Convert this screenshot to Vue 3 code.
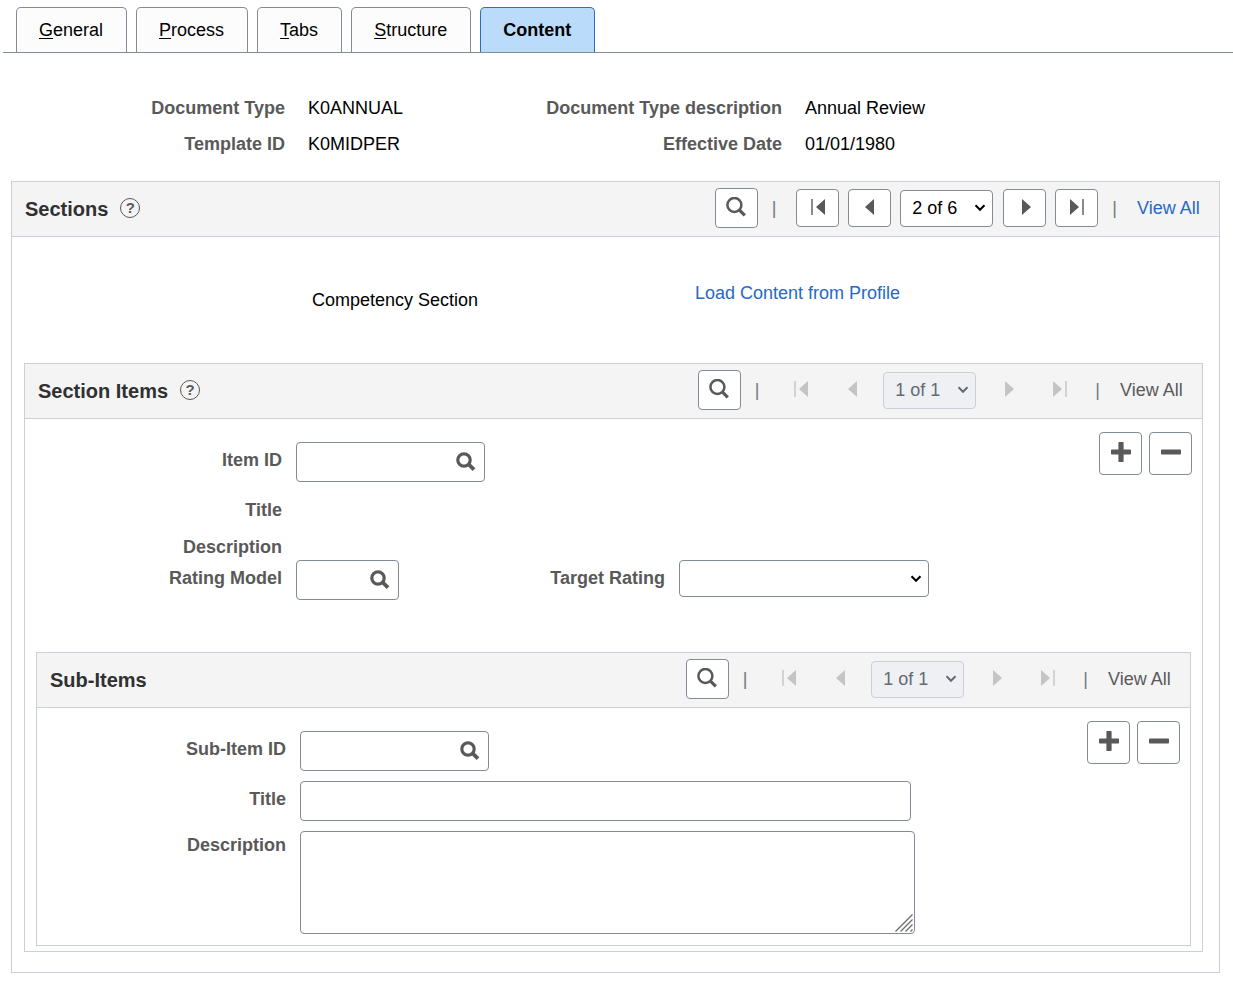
<script setup>
import { ref } from 'vue'

const tabs = [
  { key: 'G', rest: 'eneral' },
  { key: 'P', rest: 'rocess' },
  { key: 'T', rest: 'abs' },
  { key: 'S', rest: 'tructure' },
  { key: '', rest: 'Content', active: true },
]

const sectionRow = ref('2 of 6')
const sectionRows = ['1 of 6', '2 of 6', '3 of 6', '4 of 6', '5 of 6', '6 of 6']

const itemId = ref('')
const ratingModel = ref('')
const targetRating = ref('')
const subItemId = ref('')
const subTitle = ref('')
const subDescription = ref('')
</script>

<template>
  <div class="page">
    <svg class="sprite" aria-hidden="true">
      <symbol id="i-search" viewBox="0 0 20 20">
        <circle cx="8.4" cy="8" r="7" fill="none" stroke="currentColor" stroke-width="2.5" />
        <path d="M13.2 12.8 L18.8 18.4" stroke="currentColor" stroke-width="3.2" />
      </symbol>
      <symbol id="i-lookup" viewBox="0 0 20 20">
        <circle cx="8" cy="8" r="6.2" fill="none" stroke="currentColor" stroke-width="3.2" />
        <path d="M12.4 12.2 L18 17.6" stroke="currentColor" stroke-width="3.8" />
      </symbol>
      <symbol id="i-first" viewBox="0 0 14 16">
        <path d="M14 0 V16 L5 8 Z" fill="currentColor" />
        <path d="M1 0 V16" stroke="currentColor" stroke-width="1.4" />
      </symbol>
      <symbol id="i-prev" viewBox="0 0 14 16">
        <path d="M11 0 V16 L2 8 Z" fill="currentColor" />
      </symbol>
      <symbol id="i-next" viewBox="0 0 14 16">
        <path d="M4 0 V16 L13 8 Z" fill="currentColor" />
      </symbol>
      <symbol id="i-last" viewBox="0 0 14 16">
        <path d="M0 0 V16 L9 8 Z" fill="currentColor" />
        <path d="M13 0 V16" stroke="currentColor" stroke-width="1.4" />
      </symbol>
      <symbol id="i-plus" viewBox="0 0 20 20">
        <rect x="0" y="7.4" width="20" height="5.2" rx="0.8" fill="currentColor" />
        <rect x="7.4" y="0" width="5.2" height="20" rx="0.8" fill="currentColor" />
      </symbol>
      <symbol id="i-minus" viewBox="0 0 20 20">
        <rect x="0" y="7.4" width="20" height="5.2" rx="0.8" fill="currentColor" />
      </symbol>
    </svg>

    <nav class="tabs">
      <a v-for="tab in tabs" :key="tab.rest" href="#" class="tab" :class="{ active: tab.active }"><span class="key">{{ tab.key }}</span>{{ tab.rest }}</a>
    </nav>

    <div class="summary">
      <span class="label">Document Type</span><span>K0ANNUAL</span>
      <span class="label">Document Type description</span><span>Annual Review</span>
      <span class="label">Template ID</span><span>K0MIDPER</span>
      <span class="label">Effective Date</span><span>01/01/1980</span>
    </div>

    <section class="panel sections">
      <header class="bar">
        <h2>Sections</h2>
        <button class="help" type="button" aria-label="Help">?</button>
        <div class="tools">
          <button class="btn find" type="button" aria-label="Find"><svg class="i20"><use href="#i-search" /></svg></button>
          <span class="sep">|</span>
          <button class="btn" type="button" aria-label="First"><svg class="i14"><use href="#i-first" /></svg></button>
          <button class="btn" type="button" aria-label="Previous"><svg class="i14"><use href="#i-prev" /></svg></button>
          <select v-model="sectionRow" class="select rows" aria-label="Section row">
            <option v-for="row in sectionRows" :key="row">{{ row }}</option>
          </select>
          <button class="btn" type="button" aria-label="Next"><svg class="i14"><use href="#i-next" /></svg></button>
          <button class="btn" type="button" aria-label="Last"><svg class="i14"><use href="#i-last" /></svg></button>
          <span class="sep">|</span>
          <a href="#" class="link all">View All</a>
        </div>
      </header>

      <div class="intro">
        <span class="intro-name">Competency Section</span>
        <a href="#" class="link">Load Content from Profile</a>
      </div>

      <section class="panel items">
        <header class="bar">
          <h2>Section Items</h2>
          <button class="help" type="button" aria-label="Help">?</button>
          <div class="tools">
            <button class="btn find" type="button" aria-label="Find"><svg class="i20"><use href="#i-search" /></svg></button>
            <span class="sep">|</span>
            <button class="btn" type="button" disabled aria-label="First"><svg class="i14"><use href="#i-first" /></svg></button>
            <button class="btn" type="button" disabled aria-label="Previous"><svg class="i14"><use href="#i-prev" /></svg></button>
            <select class="select rows" disabled aria-label="Item row"><option>1 of 1</option></select>
            <button class="btn" type="button" disabled aria-label="Next"><svg class="i14"><use href="#i-next" /></svg></button>
            <button class="btn" type="button" disabled aria-label="Last"><svg class="i14"><use href="#i-last" /></svg></button>
            <span class="sep">|</span>
            <span class="off all">View All</span>
          </div>
        </header>

        <div class="body">
          <div class="form item-form">
            <div class="row">
              <label class="label" for="item-id">Item ID</label>
              <div class="lookup wide">
                <input id="item-id" v-model="itemId" class="field" type="text" />
                <button type="button" aria-label="Look up Item ID"><svg class="i20"><use href="#i-lookup" /></svg></button>
              </div>
            </div>
            <div class="row title-row"><span class="label">Title</span></div>
            <div class="row"><span class="label">Description</span></div>
            <div class="row rating-row">
              <label class="label" for="rating-model">Rating Model</label>
              <div class="lookup narrow">
                <input id="rating-model" v-model="ratingModel" class="field" type="text" />
                <button type="button" aria-label="Look up Rating Model"><svg class="i20"><use href="#i-lookup" /></svg></button>
              </div>
              <label class="label second" for="target-rating">Target Rating</label>
              <select id="target-rating" v-model="targetRating" class="select target"><option value=""></option></select>
            </div>
          </div>
          <div class="actions">
            <button class="btn square" type="button" aria-label="Add item"><svg class="i20"><use href="#i-plus" /></svg></button>
            <button class="btn square" type="button" aria-label="Delete item"><svg class="i20"><use href="#i-minus" /></svg></button>
          </div>
        </div>

        <section class="panel subitems">
          <header class="bar">
            <h2>Sub-Items</h2>
            <div class="tools">
              <button class="btn find" type="button" aria-label="Find"><svg class="i20"><use href="#i-search" /></svg></button>
              <span class="sep">|</span>
              <button class="btn" type="button" disabled aria-label="First"><svg class="i14"><use href="#i-first" /></svg></button>
              <button class="btn" type="button" disabled aria-label="Previous"><svg class="i14"><use href="#i-prev" /></svg></button>
              <select class="select rows" disabled aria-label="Sub-item row"><option>1 of 1</option></select>
              <button class="btn" type="button" disabled aria-label="Next"><svg class="i14"><use href="#i-next" /></svg></button>
              <button class="btn" type="button" disabled aria-label="Last"><svg class="i14"><use href="#i-last" /></svg></button>
              <span class="sep">|</span>
              <span class="off all">View All</span>
            </div>
          </header>

          <div class="body">
            <div class="form sub-form">
              <div class="row">
                <label class="label" for="sub-id">Sub-Item ID</label>
                <div class="lookup wide">
                  <input id="sub-id" v-model="subItemId" class="field" type="text" />
                  <button type="button" aria-label="Look up Sub-Item ID"><svg class="i20"><use href="#i-lookup" /></svg></button>
                </div>
              </div>
              <div class="row">
                <label class="label" for="sub-title">Title</label>
                <input id="sub-title" v-model="subTitle" class="field sub-title" type="text" />
              </div>
              <div class="row area-row">
                <label class="label" for="sub-desc">Description</label>
                <div class="area">
                  <textarea id="sub-desc" v-model="subDescription" class="field"></textarea>
                  <svg class="grip" viewBox="0 0 18 18" aria-hidden="true">
                    <path d="M0.5 17.5 L17.5 0.5 M5.5 17.5 L17.5 5.5 M10.5 17.5 L17.5 10.5 M15.5 17.5 L17.5 15.5" stroke="#6b6b6b" stroke-width="1.3" />
                  </svg>
                </div>
              </div>
            </div>
            <div class="actions">
              <button class="btn square" type="button" aria-label="Add sub-item"><svg class="i20"><use href="#i-plus" /></svg></button>
              <button class="btn square" type="button" aria-label="Delete sub-item"><svg class="i20"><use href="#i-minus" /></svg></button>
            </div>
          </div>
        </section>
      </section>
    </section>
  </div>
</template>

<style>
body {
  margin: 0;
  background: #fff;
}
</style>

<style scoped>
.page,
.page * {
  box-sizing: border-box;
}
.page {
  font: 18px/20px "Liberation Sans", Arial, sans-serif;
  color: #000;
  padding: 7px 0 10px;
}
.sprite {
  position: absolute;
  width: 0;
  height: 0;
}
.i20 {
  display: block;
  width: 20px;
  height: 20px;
}
.i14 {
  display: block;
  width: 14px;
  height: 16px;
}

.tabs {
  display: flex;
  gap: 9px;
  margin-left: 3px;
  padding-left: 13px;
  border-bottom: 1px solid #828b96;
}
.tab {
  height: 45px;
  padding: 12px 23px 0 22px;
  border: 1px solid #828b96;
  border-bottom: 0;
  border-radius: 5px 5px 0 0;
  background: #fcfcfc;
  color: #000;
  text-decoration: none;
}
.tab.active {
  background: #badcfa;
  border-color: #2b6cc4;
  font-weight: bold;
}
.key {
  text-decoration: underline;
  text-decoration-thickness: 1px;
  text-underline-offset: 2px;
}

.label {
  color: #595959;
  font-weight: bold;
  text-align: right;
}
.summary {
  display: grid;
  grid-template-columns: 285px 210px 241px 1fr;
  gap: 16px 23px;
  padding: 45px 0 27px;
}

.panel {
  border: 1px solid #cbd0d8;
}
.sections {
  margin: 0 13px 0 11px;
  padding-bottom: 20px;
}
.items {
  margin: 0 16px 0 12px;
  padding-bottom: 5px;
}
.subitems {
  margin: 0 11px;
}
.bar {
  display: flex;
  align-items: center;
  padding: 6px 18px 8px 13px;
  background: #f4f4f4;
  border-bottom: 1px solid #cbd0d8;
}
h2 {
  margin: 0;
  padding-top: 2px;
  font-size: 20px;
  line-height: 24px;
  color: #303030;
}
.help {
  width: 20px;
  height: 20px;
  margin-left: 12px;
  padding: 0;
  border: 1px solid #595959;
  border-radius: 50%;
  background: transparent;
  color: #595959;
  font: bold 15px/18px "Liberation Sans", Arial, sans-serif;
  text-align: center;
}
.tools {
  display: flex;
  align-items: center;
  gap: 9px;
  margin-left: auto;
}
.all {
  min-width: 64px;
}
.sep {
  margin: 0 11px 0 5px;
  color: #707880;
}
.btn {
  display: flex;
  align-items: center;
  justify-content: center;
  width: 43px;
  height: 38px;
  padding: 0 0 3px;
  border: 1px solid #828b96;
  border-radius: 4px;
  background: #fff;
  color: #595959;
}
.btn.find {
  height: 40px;
}
.btn.square {
  height: 43px;
}
.btn:disabled {
  border-color: transparent;
  background: transparent;
  color: #c4c4c4;
}
.select {
  appearance: none;
  height: 37px;
  padding: 0 24px 0 11px;
  border: 1px solid #828b96;
  border-radius: 4px;
  background: #fff url("data:image/svg+xml,%3Csvg xmlns='http://www.w3.org/2000/svg' width='12' height='8'%3E%3Cpath d='M1.5 1.2 L6 5.8 L10.5 1.2' fill='none' stroke='%23000' stroke-width='2'/%3E%3C/svg%3E") no-repeat right 6px center;
  color: #000;
  font: 18px "Liberation Sans", Arial, sans-serif;
}
.select:disabled {
  border-color: #cbd0d8;
  background-color: #eef0f4;
  background-image: url("data:image/svg+xml,%3Csvg xmlns='http://www.w3.org/2000/svg' width='12' height='8'%3E%3Cpath d='M1.5 1.2 L6 5.8 L10.5 1.2' fill='none' stroke='%23646b73' stroke-width='2'/%3E%3C/svg%3E");
  color: #646b73;
  opacity: 1;
}
.rows {
  width: 93px;
  margin-right: 1px;
}
.link {
  color: #2768c8;
  text-decoration: none;
}
.off {
  color: #595959;
}

.intro {
  display: flex;
  align-items: flex-start;
  padding: 46px 0 53px 300px;
}
.intro-name {
  width: 383px;
  padding-top: 7px;
}

.body {
  display: flex;
  align-items: flex-start;
}
.form {
  flex: 1;
  display: flex;
  flex-direction: column;
}
.row {
  display: flex;
  align-items: flex-start;
  gap: 14px;
}
.item-form {
  padding: 23px 0 52px;
  gap: 17px;
}
.item-form .label {
  width: 257px;
}
.item-form .label.second {
  width: 252px;
}
.sub-form {
  padding: 23px 0 11px;
  gap: 10px;
}
.sub-form .label {
  width: 249px;
}
.row > label {
  padding-top: 8px;
}
.area-row > label {
  padding-top: 4px;
}
.title-row {
  padding-top: 1px;
}
.rating-row {
  margin-top: -14px;
}
.field {
  display: block;
  height: 40px;
  margin: 0;
  padding: 0 8px;
  border: 1px solid #828b96;
  border-radius: 4px;
  background: #fff;
  font: 18px "Liberation Sans", Arial, sans-serif;
}
.lookup {
  position: relative;
}
.lookup .field {
  width: 100%;
  padding-right: 36px;
}
.lookup button {
  position: absolute;
  top: 10px;
  right: 9px;
  padding: 0;
  border: 0;
  background: transparent;
  color: #595959;
}
.wide {
  width: 189px;
}
.narrow {
  width: 103px;
}
.target {
  width: 250px;
}
.sub-title {
  width: 611px;
}
.area {
  position: relative;
}
.area .field {
  width: 615px;
  height: 103px;
  padding: 8px;
  resize: none;
}
.grip {
  position: absolute;
  right: 2px;
  bottom: 2px;
  width: 18px;
  height: 18px;
  pointer-events: none;
}
.actions {
  display: flex;
  gap: 7px;
  padding: 13px 10px 0 0;
}
</style>
